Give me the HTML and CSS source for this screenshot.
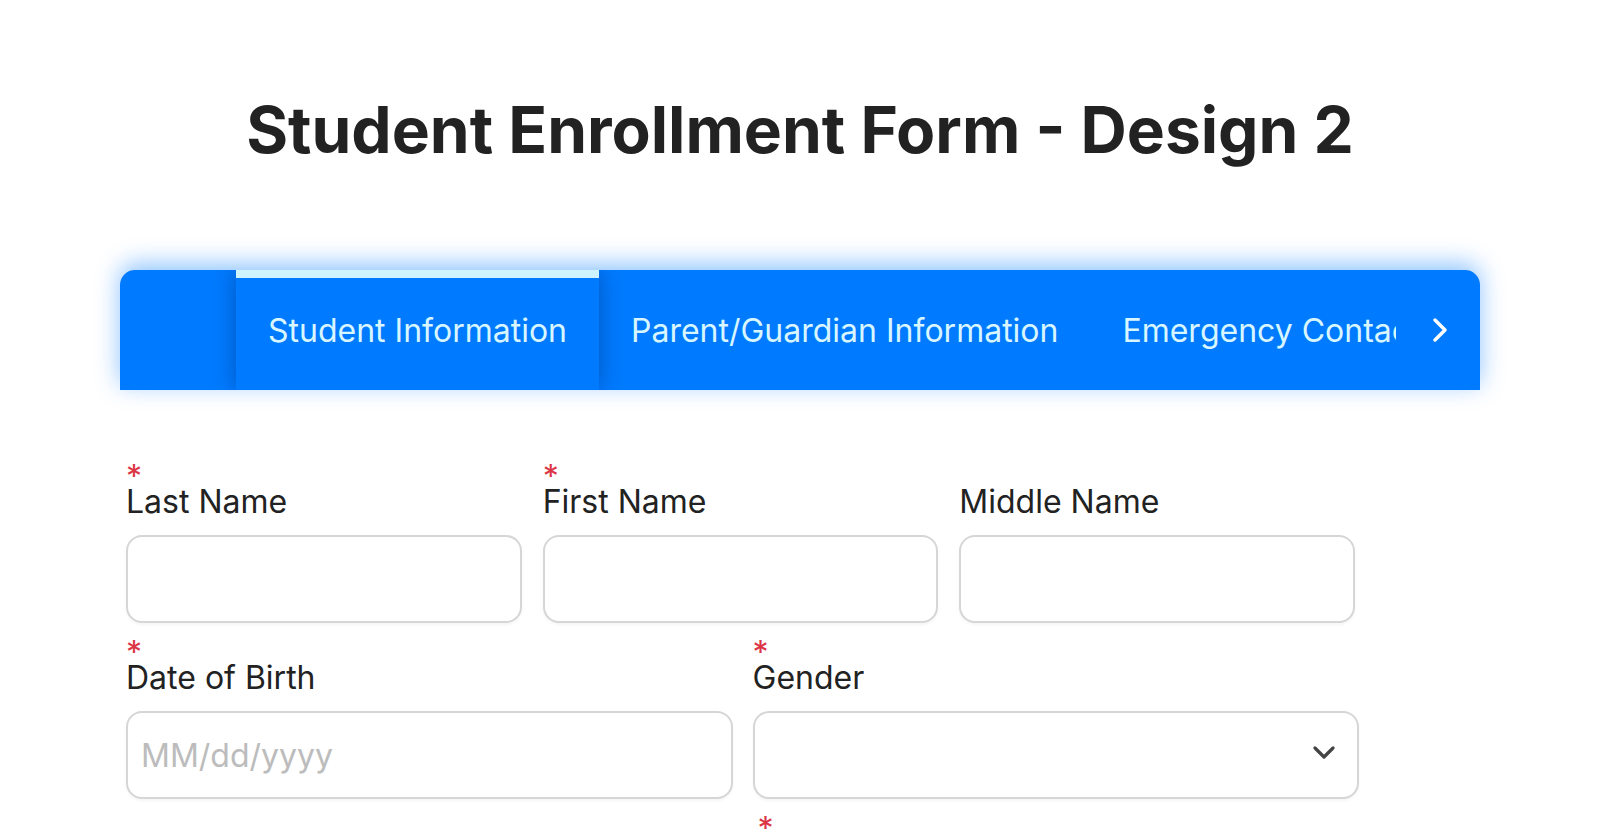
FILE: index.html
```html
<!DOCTYPE html>
<html lang="en">
<head>
<meta charset="utf-8">
<title>Student Enrollment Form - Design 2</title>
<link rel="stylesheet" href="styles.css">
</head>
<body>
<div class="page">
  <h1 class="title">Student Enrollment Form - Design 2</h1>

  <div class="tabbar">
    <div class="tabs">
      <div class="tab active">Student Information</div>
      <div class="tab">Parent/Guardian Information</div>
      <div class="tab">Emergency Contact Information</div>
    </div>
    <button class="tab-next" type="button" aria-label="Next">
      <svg width="16" height="24" viewBox="0 0 16 24"><path d="M3 2 L13 12 L3 22" fill="none" stroke="#ffffff" stroke-width="3.4" stroke-linecap="round" stroke-linejoin="round"/></svg>
    </button>
  </div>

  <form class="form">
    <div class="row row-3">
      <div class="field">
        <span class="req">*</span>
        <label class="label">Last Name</label>
        <input class="input" type="text">
      </div>
      <div class="field">
        <span class="req">*</span>
        <label class="label">First Name</label>
        <input class="input" type="text">
      </div>
      <div class="field">
        <span class="req hidden">*</span>
        <label class="label">Middle Name</label>
        <input class="input" type="text">
      </div>
    </div>

    <div class="row row-2">
      <div class="field">
        <span class="req">*</span>
        <label class="label">Date of Birth</label>
        <input class="input" type="text" placeholder="MM/dd/yyyy">
      </div>
      <div class="field">
        <span class="req">*</span>
        <label class="label">Gender</label>
        <div class="select-wrap">
          <select class="input select">
            <option value=""></option>
            <option>Male</option>
            <option>Female</option>
          </select>
          <svg class="select-arrow" width="22" height="13" viewBox="0 0 22 13"><path d="M2 2 L11 11 L20 2" fill="none" stroke="#444444" stroke-width="3.2" stroke-linecap="round" stroke-linejoin="round"/></svg>
        </div>
      </div>
    </div>

    <div class="row row-2">
      <div class="field"></div>
      <div class="field field-shift">
        <span class="req">*</span>
      </div>
    </div>
  </form>
</div>
</body>
</html>
```

FILE: styles.css
```css
* {
  box-sizing: border-box;
}

html, body {
  margin: 0;
  padding: 0;
  background: #ffffff;
  overflow: hidden;
}

body {
  font-family: "Inter", "Liberation Sans", sans-serif;
  color: #222222;
}

.page {
  width: 1360px;
  margin: 0 auto;
  padding-top: 90px;
}

.title {
  margin: 0 0 100px 0;
  font-size: 64px;
  line-height: 80px;
  font-weight: 700;
  text-align: center;
  color: #222222;
}

/* ---------- tab bar ---------- */
.tabbar {
  display: flex;
  height: 120px;
  background: #007bff;
  border-radius: 15px 15px 0 0;
  box-shadow: 0 -6px 24px rgba(0, 123, 255, 0.45);
}

.tabs {
  flex: 1;
  display: flex;
  overflow: hidden;
  padding-left: 116px;
  border-radius: 15px 0 0 0;
}

.tab {
  flex: none;
  display: flex;
  align-items: center;
  padding: 0 32px;
  font-size: 32px;
  color: #d8f6ff;
  white-space: nowrap;
}

.tab.active {
  position: relative;
  z-index: 1;
  background: #007bff;
  box-shadow: inset 0 8px 0 #cdf4ff, 0 0 22px rgba(0, 40, 110, 0.45);
}

.tab-next {
  flex: none;
  width: 84px;
  border: 0;
  padding: 0 0 0 4px;
  background: transparent;
  display: flex;
  align-items: center;
  justify-content: center;
  border-radius: 0 15px 0 0;
}

/* ---------- form ---------- */
.form {
  padding: 81px 0 0 6px;
  display: flex;
  flex-direction: column;
  gap: 24px;
}

.row {
  display: grid;
}

.row-3 {
  width: 1229px;
  column-gap: 21px;
  grid-template-columns: repeat(3, 1fr);
}

.row-2 {
  width: 1233px;
  column-gap: 20px;
  grid-template-columns: repeat(2, 1fr);
}

.field {
  display: flex;
  flex-direction: column;
}

.field-shift .req {
  margin-left: 5px;
}

.req {
  display: block;
  height: 12px;
  font-size: 32px;
  line-height: 12px;
  color: #dc3545;
}

.req.hidden {
  visibility: hidden;
}

.label {
  display: block;
  font-size: 32px;
  line-height: 38px;
  margin-bottom: 14px;
  color: #222222;
}

.input {
  display: block;
  width: 100%;
  height: 88px;
  border: 2px solid #d6d6d6;
  border-radius: 16px;
  padding: 0 13px;
  font-family: "Inter", "Liberation Sans", sans-serif;
  font-size: 32px;
  color: #222222;
  background: #ffffff;
  outline: none;
  box-shadow: 0 2px 3px rgba(0, 0, 0, 0.04);
}

.input::placeholder {
  color: #bcbcbc;
}

.select-wrap {
  position: relative;
}

.select {
  appearance: none;
  -webkit-appearance: none;
}

.select-arrow {
  position: absolute;
  right: 24px;
  top: 35px;
  pointer-events: none;
}
```
